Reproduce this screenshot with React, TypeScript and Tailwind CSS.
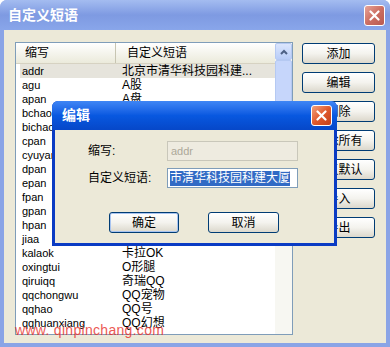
const rows: [string, string][] = [
  ['addr', '北京市清华科技园科建...'],
  ['agu', 'A股'],
  ['apan', 'A盘'],
  ['bchao', 'B超'],
  ['bichao', '比超'],
  ['cpan', 'C盘'],
  ['cyuyan', 'C语言'],
  ['dpan', 'D盘'],
  ['epan', 'E盘'],
  ['fpan', 'F盘'],
  ['gpan', 'G盘'],
  ['hpan', 'H盘'],
  ['jiaa', 'OK'],
  ['kalaok', '卡拉OK'],
  ['oxingtui', 'O形腿'],
  ['qiruiqq', '奇瑞QQ'],
  ['qqchongwu', 'QQ宠物'],
  ['qqhao', 'QQ号'],
  ['qqhuanxiang', 'QQ幻想'],
]

const sideButtons = ['添加', '编辑', '删除', '删除所有', '恢复默认', '导入', '导出']

function CloseButton({ active }: { active?: boolean }) {
  return (
    <div
      className={
        'flex h-[21px] w-[21px] items-center justify-center rounded-[3px] border border-white ' +
        (active
          ? 'bg-gradient-to-br from-[#f0a07a] via-[#e0592c] to-[#c2401c]'
          : 'bg-gradient-to-br from-[#e6a49a] via-[#cc6e62] to-[#b85a50]')
      }
    >
      <svg width="11" height="11" viewBox="0 0 11 11">
        <path d="M1.5 1.5 L9.5 9.5 M9.5 1.5 L1.5 9.5" stroke="#fff" strokeWidth="2.2" strokeLinecap="round" />
      </svg>
    </div>
  )
}

function XpButton({ label, focused }: { label: string; focused?: boolean }) {
  return (
    <div
      className={
        'flex h-[21px] items-center justify-center rounded-[3px] border border-[#003c74] bg-gradient-to-b from-[#ffffff] via-[#f4f3ee] to-[#dcd8cc] text-[12px] text-black ' +
        (focused ? 'shadow-[inset_0_0_0_1px_#a8c4f0]' : '')
      }
    >
      {label}
    </div>
  )
}

function App() {
  return (
    <div className="relative h-[347px] w-[390px] overflow-hidden rounded-t-[7px] bg-[#8aa4e6] px-[4px] pb-[4px] font-['Liberation_Sans','Noto_Sans_CJK_SC',sans-serif]">
      {/* outer title bar (inactive) */}
      <div className="-mx-[4px] flex h-[30px] items-center justify-between bg-gradient-to-b from-[#a4bcf0] via-[#7e9ae2] to-[#89a6ea] pl-[8px] pr-[5px]">
        <span className="text-[14px] font-bold text-white">自定义短语</span>
        <CloseButton />
      </div>

      <div className="flex h-[313px] bg-[#ece9d8] pl-[11px] pt-[12px]">
        {/* list view */}
        <div className="flex h-[293px] w-[278px] border border-[#7f9db9] bg-white">
          <div className="flex w-[260px] flex-col">
            <div className="flex h-[21px] border-b border-[#d6d2c2] bg-gradient-to-b from-[#ffffff] to-[#ebeadb] text-[12px] text-black">
              <div className="flex w-[100px] items-center border-r border-[#c7c5b2] pl-[9px]">缩写</div>
              <div className="flex items-center pl-[11px]">自定义短语</div>
            </div>
            {rows.map(([k, v], i) => (
              <div
                key={k}
                className={'flex h-[14px] items-center ' + (i === 0 ? 'ml-[4px] bg-[#e6e4dc]' : '')}
              >
                <div className={'text-[11px] leading-[14px] text-black ' + (i === 0 ? 'w-[96px] pl-[2px]' : 'w-[100px] pl-[6px]')}>
                  {k}
                </div>
                <div className="pl-[6px] text-[12px] leading-[14px] text-black whitespace-nowrap">{v}</div>
              </div>
            ))}
          </div>
          {/* scrollbar */}
          <div className="ml-auto flex w-[17px] flex-col bg-[#f7f7f2]">
            <div className="flex h-[17px] items-center justify-center rounded-[2px] border border-[#b5c9f2] bg-gradient-to-b from-[#dbe6fd] to-[#b9cdf8]">
              <svg width="8" height="6" viewBox="0 0 8 6">
                <path d="M1 5 L4 2 L7 5" stroke="#4d6185" strokeWidth="2" fill="none" />
              </svg>
            </div>
            <div className="h-[120px] rounded-[2px] border border-[#b5c9f2] bg-[#c6d6fb]" />
          </div>
        </div>

        {/* side buttons */}
        <div className="ml-[9px] mt-[1px] flex w-[73px] flex-col gap-[8px]">
          {sideButtons.map((b) => (
            <XpButton key={b} label={b} />
          ))}
        </div>
      </div>

      {/* edit dialog on top */}
      <div className="absolute left-[52px] top-[101px] flex h-[145px] w-[285px] flex-col overflow-hidden rounded-t-[6px] bg-[#0a3bc4] px-[3px] pb-[3px]">
        <div className="-mx-[3px] flex h-[29px] items-center justify-between bg-gradient-to-b from-[#3f86f5] via-[#0858e0] to-[#0647c8] pl-[10px] pr-[5px]">
          <span className="text-[14px] font-bold text-white">编辑</span>
          <CloseButton active />
        </div>
        <div className="flex flex-1 flex-col bg-[#ece9d8] pl-[33px] pt-[11px]">
          <div className="grid grid-cols-[79px_131px] gap-y-[7px] text-[12px] text-black">
            <div className="flex h-[20px] items-center">缩写:</div>
            <div className="flex h-[20px] items-center border border-[#c9c7ba] bg-[#eeebe0] pl-[3px] text-[11px] text-[#aca899]">
              addr
            </div>
            <div className="flex h-[20px] items-center">自定义短语:</div>
            <div className="flex h-[20px] items-center overflow-hidden whitespace-nowrap border border-[#7f9db9] bg-white pl-[2px]">
              <span className="bg-[#316ac5] leading-[15px] text-white">市清华科技园科建大厦</span>
            </div>
          </div>
          <div className="ml-[21px] mt-[24px] flex gap-[29px]">
            <div className="w-[70px]">
              <XpButton label="确定" focused />
            </div>
            <div className="w-[71px]">
              <XpButton label="取消" />
            </div>
          </div>
        </div>
      </div>

      {/* watermark */}
      <div className="absolute left-[15px] top-[320px] text-[14px] tracking-[0.3px] text-[#e8302a] opacity-80">
        www. qinpinchang.com
      </div>
    </div>
  )
}

export default App
